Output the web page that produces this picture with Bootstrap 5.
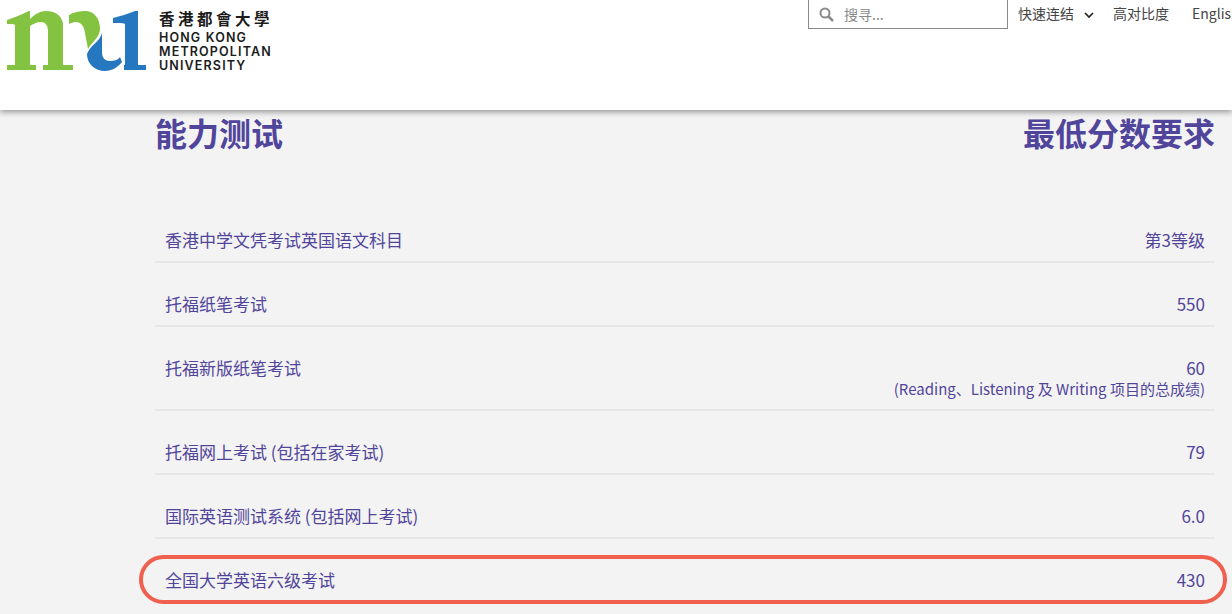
<!DOCTYPE html>
<html lang="zh">
<head>
<meta charset="utf-8">
<title>能力测试</title>
<link href="https://cdn.jsdelivr.net/npm/bootstrap@5.3.0/dist/css/bootstrap.min.css" rel="stylesheet">
<style>
html,body{height:614px;overflow:hidden;}
body{background:#f3f3f3;font-family:"Noto Sans CJK SC","Liberation Sans",sans-serif;color:#51459b;font-size:17px;}
.site-head{height:110px;background:#fff;box-shadow:0 2px 6px rgba(0,0,0,.4);position:relative;overflow:hidden;}
.logo-mark{width:150px;height:75px;flex:none;}
.logo-text{margin:9px 0 0 9px;color:#1c1c1c;font-family:Inter,"Liberation Sans",sans-serif;font-size:12.5px;font-weight:600;line-height:14px;letter-spacing:1.15px;white-space:nowrap;}
.logo-zh{font-family:"Noto Sans CJK TC",sans-serif;font-size:15.5px;letter-spacing:3.5px;line-height:19px;font-weight:700;margin-bottom:3px;}
.search-box{width:200px;height:30px;margin-top:-1px;border:1px solid #8a8a8a;color:#8a8a8a;font-size:14px;padding-left:10px;gap:10px;}
.top-links{position:absolute;left:808px;top:0;width:460px;}
.top-link{font-size:14px;color:#444;white-space:nowrap;line-height:27px;}
.link-a{margin-left:10px;}.link-b{margin-left:19px;}.link-c{margin-left:23px;}
.caret-ic{margin-left:10px;}
.score-wrap{margin-left:155px;width:1060px;}
.score-title{font-size:32px;font-weight:700;line-height:44px;margin:0;color:#51459b;height:89px;}
.score-line{min-height:64px;border-bottom:2px solid #e6e6e6;padding:30px 10px 0;line-height:22px;position:relative;}
.score-note{font-size:15px;display:block;margin-top:-1px;}
.score-line.tall{min-height:84px;}
.score-line.last{border-bottom:0;}
.oval-mark{position:absolute;left:-16px;right:-12px;top:16px;height:49px;border:4px solid #f0604f;border-radius:25px;pointer-events:none;}
</style>
</head>
<body>
<header class="site-head d-flex">
  <svg class="logo-mark" viewBox="0 0 150 75" aria-label="mu">
    <path fill="#84c341" d="M7 20 C13 18 21 15 29 11 H30 V19 C35 14 40 11 46 11 C55 11 61 15 63 23 V65 H73 V70 H43 V65 H48 V31 C48 25 45 22 41 22 C37 22 33 24 30 26 V65 H36 V70 H7 V65 H15 V25 C15 24 10 24 7 24 Z"/>
    <path fill="#84c341" d="M69 15 C74 12 80 11 85 11 C94 11 100 18 100 29 C100 37 92 42 88 49 C87 44 86 38 85 33 C84 26 81 22 76 22 C73 22 71 23 69 24 Z"/>
    <path fill="#2577c0" d="M87 54 C90 45 100 42 102 33 V52 C102 58 105 61 110 61 C114 61 118 60 120 57 L122 62 C118 67 112 71 105 71 C95 71 87 64 87 54 Z"/>
    <path fill="#2577c0" d="M113 18 C120 16 128 14 135 11 H138 V65 H146 V70 H124 V65 H125 V24 C125 23 118 23 113 23 Z"/>
  </svg>
  <div class="logo-text">
    <div class="logo-zh">香港都會大學</div>
    <div>HONG KONG</div><div>METROPOLITAN</div><div>UNIVERSITY</div>
  </div>
  <div class="top-links d-flex align-items-start">
    <div class="search-box d-flex align-items-center">
      <svg width="15" height="15" viewBox="0 0 15 15"><circle cx="6" cy="6" r="4.5" fill="none" stroke="#8a8a8a" stroke-width="2"/><path d="M9.5 9.5 L14 14" stroke="#8a8a8a" stroke-width="2.5"/></svg>
      <span>搜寻...</span>
    </div>
    <span class="top-link link-a">快速连结<svg class="caret-ic" width="10" height="8" viewBox="0 0 10 8"><path d="M1 2 L5 6 L9 2" fill="none" stroke="#222" stroke-width="1.7"/></svg></span>
    <span class="top-link link-b">高对比度</span>
    <span class="top-link link-c">English</span>
  </div>
</header>
<main class="score-wrap">
  <div class="score-title d-flex justify-content-between"><span>能力测试</span><span>最低分数要求</span></div>
  <div class="score-line d-flex justify-content-between"><span>香港中学文凭考试英国语文科目</span><span>第3等级</span></div>
  <div class="score-line d-flex justify-content-between"><span>托福纸笔考试</span><span>550</span></div>
  <div class="score-line tall d-flex justify-content-between"><span>托福新版纸笔考试</span><span class="text-end">60<span class="score-note">(Reading、Listening 及 Writing 项目的总成绩)</span></span></div>
  <div class="score-line d-flex justify-content-between"><span>托福网上考试 (包括在家考试)</span><span>79</span></div>
  <div class="score-line d-flex justify-content-between"><span>国际英语测试系统 (包括网上考试)</span><span>6.0</span></div>
  <div class="score-line last d-flex justify-content-between"><span>全国大学英语六级考试</span><span>430</span><div class="oval-mark"></div></div>
</main>
<script src="https://cdn.jsdelivr.net/npm/bootstrap@5.3.0/dist/js/bootstrap.bundle.min.js"></script>
</body>
</html>
